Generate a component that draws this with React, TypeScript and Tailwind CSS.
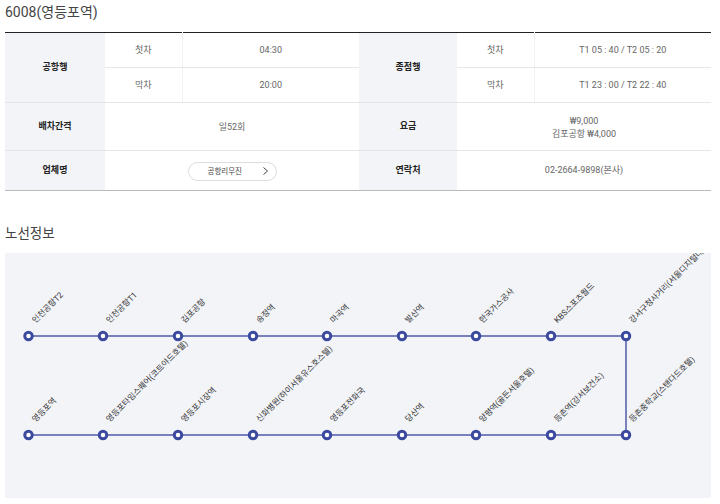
const font = { fontFamily: '"Roboto", "Noto Sans CJK KR", sans-serif' };

const topStops = [
    '인천공항T2',
    '인천공항T1',
    '김포공항',
    '송정역',
    '마곡역',
    '발산역',
    '한국가스공사',
    'KBS스포츠월드',
    '강서구청사거리(서울디지털대학교)',
];

const bottomStops = [
    '영등포역',
    '영등포타임스퀘어(코트야드호텔)',
    '영등포시장역',
    '신화병원(하이서울유스호스텔)',
    '영등포전화국',
    '당산역',
    '양평역(골든서울호텔)',
    '등촌역(강서보건소)',
    '등촌중학교(스탠다드호텔)',
];

const stopX = [23.5, 98, 173, 248, 322, 397, 471, 546, 621];
const topY = 83;
const bottomY = 182;

function Th({ children, rowSpan }: { children: React.ReactNode; rowSpan?: number }) {
    return (
        <th rowSpan={rowSpan} className="bg-[#f2f4f8] border-b border-[#e6e6e6] pt-[1px] text-[9px] font-bold text-[#222] text-center">
            {children}
        </th>
    );
}

function Td({ children, colSpan, className = '' }: { children: React.ReactNode; colSpan?: number; className?: string }) {
    return (
        <td colSpan={colSpan} className={`border-b border-[#e6e6e6] pt-[2px] text-[9px] text-[#666] text-center ${className}`}>
            {children}
        </td>
    );
}

function StopLabel({ name, x, y }: { name: string; x: number; y: number }) {
    return (
        <span
            className="absolute origin-bottom-left -rotate-45 whitespace-nowrap text-[8.2px] leading-[10px] text-[#333]"
            style={{ left: x + 8, top: y - 21 }}
        >
            {name}
        </span>
    );
}

export default function App() {
    return (
        <div className="w-[720px] h-[504px] bg-white overflow-hidden px-[5px]" style={font}>
            <h2 className="text-[14px] leading-[24px] font-normal text-[#444] h-[32px]">6008(영등포역)</h2>

            {/* Schedule table */}
            <table className="w-[706px] table-fixed border-collapse border-t border-[#222]">
                <colgroup>
                    <col className="w-[100px]" />
                    <col className="w-[77px]" />
                    <col className="w-[177px]" />
                    <col className="w-[98px]" />
                    <col className="w-[77px]" />
                    <col className="w-[177px]" />
                </colgroup>
                <tbody>
                    <tr className="h-[35px]">
                        <Th rowSpan={2}>공항행</Th>
                        <Td className="border-r border-r-[#f2f2f2] text-[#1f3d5c]">첫차</Td>
                        <Td>04:30</Td>
                        <Th rowSpan={2}>종점행</Th>
                        <Td className="border-r border-r-[#f2f2f2] text-[#1f3d5c]">첫차</Td>
                        <Td>T1 05 : 40 / T2 05 : 20</Td>
                    </tr>
                    <tr className="h-[35px]">
                        <Td className="border-r border-r-[#f2f2f2]">막차</Td>
                        <Td>20:00</Td>
                        <Td className="border-r border-r-[#f2f2f2]">막차</Td>
                        <Td>T1 23 : 00 / T2 22 : 40</Td>
                    </tr>
                    <tr className="h-[48px]">
                        <Th>배차간격</Th>
                        <Td colSpan={2}>일52회</Td>
                        <Th>요금</Th>
                        <Td colSpan={2} className="leading-[13px]">
                            ₩9,000
                            <br />
                            김포공항 ₩4,000
                        </Td>
                    </tr>
                    <tr className="h-[40px]">
                        <th className="bg-[#f2f4f8] border-b border-[#bbb] text-[9px] font-bold text-[#222]">업체명</th>
                        <td colSpan={2} className="border-b border-[#bbb] text-center">
                            <span className="inline-flex items-center justify-between w-[89px] h-[19px] rounded-full border border-[#ddd] pl-[19px] pr-[8px] text-[7.5px] text-[#444] align-middle">
                                공항리무진
                                <svg width="5" height="8" viewBox="0 0 5 8" fill="none" stroke="#444" strokeWidth="1">
                                    <path d="M0.5 0.5 L4.5 4 L0.5 7.5" />
                                </svg>
                            </span>
                        </td>
                        <th className="bg-[#f2f4f8] border-b border-[#bbb] text-[9px] font-bold text-[#222]">연락처</th>
                        <td colSpan={2} className="border-b border-[#bbb] text-[9px] text-[#666] text-center">
                            02-2664-9898(본사)
                        </td>
                    </tr>
                </tbody>
            </table>

            <h2 className="text-[13.5px] leading-[20px] font-normal text-[#444] mt-[32px] mb-[10px]">노선정보</h2>

            {/* Route map */}
            <div className="relative w-[706px] h-[245px] bg-[#f2f4f8] overflow-hidden">
                <svg width="706" height="245" className="absolute left-0 top-0">
                    <path
                        d={`M${stopX[0]} ${topY} H${stopX[8]} V${bottomY} H${stopX[0]}`}
                        fill="none"
                        stroke="#8a91c8"
                        strokeWidth="2"
                    />
                    <path
                        d={`M${stopX[0]} ${topY} H${stopX[8]} V${bottomY} H${stopX[0]}`}
                        fill="none"
                        stroke="#46529f"
                        strokeWidth="1"
                        strokeDasharray="1 1"
                    />
                    {stopX.map((x) => (
                        <g key={x} fill="#fff" stroke="#3b4a9f" strokeWidth="3">
                            <circle cx={x} cy={topY} r="3.75" />
                            <circle cx={x} cy={bottomY} r="3.75" />
                        </g>
                    ))}
                </svg>
                {topStops.map((name, i) => (
                    <StopLabel key={name} name={name} x={stopX[i]} y={topY} />
                ))}
                {bottomStops.map((name, i) => (
                    <StopLabel key={name} name={name} x={stopX[i]} y={bottomY} />
                ))}
            </div>
        </div>
    );
}
